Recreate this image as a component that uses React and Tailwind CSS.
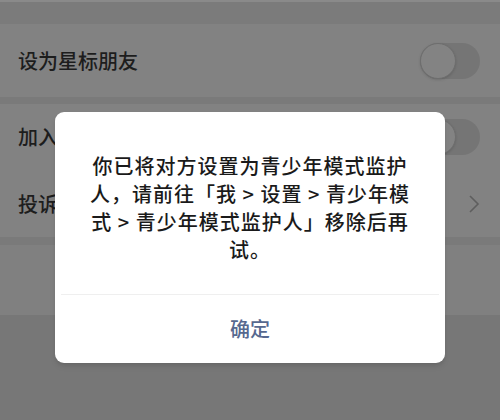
import React from 'react';

const Toggle = () => (
    <div className="w-[60px] h-[36px] rounded-full bg-[#757575] flex items-center">
        <div className="w-[36px] h-[36px] rounded-full bg-[#838383] border border-[#6e6e6e] shadow"></div>
    </div>
);

const App = () => {
    return (
        <div
            className="relative w-[500px] h-[420px] overflow-hidden bg-[#777777] text-[#1d1d1d]"
            style={{ fontFamily: '"Noto Sans CJK SC", "Noto Sans", sans-serif' }}
        >
            <div className="h-[24px] bg-[#7b7b7b] border-t-2 border-[#8a8a8a]"></div>
            <div className="h-[73px] bg-[#828282] flex items-center justify-between pl-[18px] pr-[20px]">
                <span className="text-[20px] font-medium">设为星标朋友</span>
                <Toggle />
            </div>
            <div className="h-[7px] bg-[#7a7a7a]"></div>
            <div className="h-[66px] bg-[#828282] flex items-center justify-between pl-[18px] pr-[20px]">
                <span className="text-[20px] font-medium">加入黑名单</span>
                <Toggle />
            </div>
            <div className="h-[67px] bg-[#828282] flex items-center justify-between pl-[18px] pr-[20px]">
                <span className="text-[20px] font-medium">投诉</span>
                <svg width="12" height="20" viewBox="0 0 12 20" fill="none" stroke="#5e5e5e" strokeWidth="1.6">
                    <path d="M2 2 L10 10 L2 18" />
                </svg>
            </div>
            <div className="h-[8px] bg-[#7a7a7a]"></div>
            <div className="h-[70px] bg-[#808080]"></div>

            <div className="absolute left-[55px] top-[112px] w-[390px] h-[251px] bg-white rounded-[9px] shadow-md flex flex-col">
                <div className="flex-1 px-[30px] pt-[40px] text-center text-[20px] font-medium leading-[28px] tracking-[1px] text-[#1a1a1a]">
                    你已将对方设置为青少年模式监护<br />
                    人，请前往「我 &gt; 设置 &gt; 青少年模<br />
                    式 &gt; 青少年模式监护人」移除后再<br />
                    试。
                </div>
                <div className="mx-[6px] h-px bg-[#efefef]"></div>
                <div className="h-[68px] flex items-center justify-center text-[20px] font-medium text-[#56688f]">
                    确定
                </div>
            </div>
        </div>
    );
};

export default App;
